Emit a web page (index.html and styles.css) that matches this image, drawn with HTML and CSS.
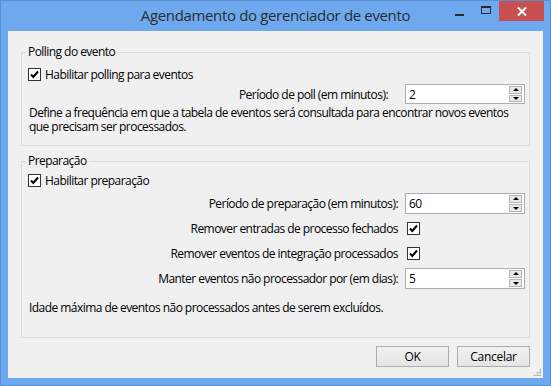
FILE: index.html
```html
<!DOCTYPE html>
<html lang="pt">
  <head>
    <meta charset="UTF-8" />
    <title>Agendamento do gerenciador de evento</title>
    <link rel="stylesheet" href="styles.css">
  </head>
  <body>
    <div class="window">
      <div class="titlebar">
        <div></div>
        <div class="title">Agendamento do gerenciador de evento</div>
        <div class="controls">
          <span class="ctl min"><i></i></span>
          <span class="ctl max"><i></i></span>
          <span class="ctl close">
            <svg width="10" height="9" viewBox="0 0 10 9"><path d="M1 0.5 L9 8.5 M9 0.5 L1 8.5" stroke="#fff" stroke-width="2"/></svg>
          </span>
        </div>
      </div>
      <div class="client">
        <fieldset class="group poll">
          <legend>Polling do evento</legend>
          <div class="form">
            <label class="check-row">
              <span class="check"><svg width="11" height="11" viewBox="0 0 11 11"><path d="M2 5.5 L4.3 8 L9 2.5" fill="none" stroke="#000" stroke-width="2"/></svg></span>
              Habilitar polling para eventos
            </label>
            <div class="label">Período de poll (em minutos):</div>
            <div class="spin"><span class="value">2</span><span class="arrows"><b class="up"></b><b class="down"></b></span></div>
          </div>
          <p class="note">Define a frequência em que a tabela de eventos será consultada para encontrar novos eventos que precisam ser processados.</p>
        </fieldset>

        <fieldset class="group prep">
          <legend>Preparação</legend>
          <div class="form">
            <label class="check-row">
              <span class="check"><svg width="11" height="11" viewBox="0 0 11 11"><path d="M2 5.5 L4.3 8 L9 2.5" fill="none" stroke="#000" stroke-width="2"/></svg></span>
              Habilitar preparação
            </label>
            <div class="label">Período de preparação (em minutos):</div>
            <div class="spin"><span class="value">60</span><span class="arrows"><b class="up"></b><b class="down"></b></span></div>
            <div class="label">Remover entradas de processo fechados</div>
            <span class="check"><svg width="11" height="11" viewBox="0 0 11 11"><path d="M2 5.5 L4.3 8 L9 2.5" fill="none" stroke="#000" stroke-width="2"/></svg></span>
            <div class="label">Remover eventos de integração processados</div>
            <span class="check"><svg width="11" height="11" viewBox="0 0 11 11"><path d="M2 5.5 L4.3 8 L9 2.5" fill="none" stroke="#000" stroke-width="2"/></svg></span>
            <div class="label">Manter eventos não processador por (em dias):</div>
            <div class="spin"><span class="value">5</span><span class="arrows"><b class="up"></b><b class="down"></b></span></div>
          </div>
          <p class="note">Idade máxima de eventos não processados antes de serem excluídos.</p>
        </fieldset>

        <div class="buttons">
          <button>OK</button>
          <button>Cancelar</button>
        </div>
        <span class="grip"></span>
      </div>
    </div>
  </body>
</html>
```

FILE: styles.css
```css
body {
  margin: 0;
  padding: 0;
  font-family: "Open Sans", "Noto Sans", sans-serif;
  font-size: 12px;
  letter-spacing: -0.55px;
  color: #000;
  background: #6ea9f0;
}
.window {
  width: 551px;
  height: 386px;
  box-sizing: border-box;
  border: 1px solid #5a8fd4;
  background: #6ea9f0;
  display: flex;
  flex-direction: column;
}
.titlebar {
  height: 30px;
  display: grid;
  grid-template-columns: 1fr auto 1fr;
  align-items: start;
}
.title {
  font-size: 15px;
  line-height: 20px;
  padding-top: 4px;
  color: #2c2c2c;
  letter-spacing: -0.35px;
}
.controls {
  display: flex;
  justify-content: flex-end;
  padding-right: 6px;
}
.ctl {
  height: 20px;
  display: flex;
  align-items: center;
  justify-content: center;
}
.min { width: 26px; }
.min i {
  width: 9px;
  height: 2px;
  margin-top: 7px;
  background: #2b2b2b;
}
.max { width: 27px; }
.max i {
  width: 8px;
  height: 5px;
  margin-top: -2px;
  border: 1px solid #2b2b2b;
  border-top-width: 2px;
}
.close {
  width: 45px;
  background: #c75050;
}
.client {
  flex: 1;
  margin: 0 7px 7px 7px;
  background: #f0f0f0;
  padding: 14px 13px 0 13px;
  position: relative;
}
.group {
  margin: 0;
  padding: 0 4px 0 6px;
  border: 1px solid #dcdcdc;
  min-width: 0;
}
.group legend {
  padding: 0 2px;
  margin-left: -2px;
  line-height: 14px;
}
.form {
  display: grid;
  grid-template-columns: 1fr 120px;
  column-gap: 7px;
  align-items: center;
}
.poll .form {
  padding-top: 5px;
  grid-template-rows: 20px 20px;
}
.poll .label {
  padding-right: 10px;
}
.prep {
  margin-top: 8px;
}
.prep .form {
  padding-top: 3px;
  grid-template-rows: 18px 21px 21px 21px 21px;
  row-gap: 4px;
}
.check-row {
  grid-column: 1 / -1;
  display: flex;
  align-items: center;
  gap: 4px;
}
.check {
  width: 11px;
  height: 11px;
  border: 1px solid #333;
  background: #fff;
  display: flex;
  align-items: center;
  justify-content: center;
}
.form > .check {
  justify-self: start;
  margin-left: 2px;
}
.label {
  text-align: right;
}
.spin {
  height: 100%;
  box-sizing: border-box;
  border: 1px solid #abadb3;
  background: #fff;
  display: flex;
  align-items: center;
  padding: 1px 2px 1px 3px;
}
.value {
  flex: 1;
}
.arrows {
  width: 13px;
  height: 100%;
  display: flex;
  flex-direction: column;
  gap: 1px;
}
.arrows b {
  flex: 1;
  background: #e8e8e8;
  border: 1px solid #b5b5b5;
  position: relative;
}
.arrows b::after {
  content: "";
  position: absolute;
  left: 50%;
  top: 50%;
  margin: -2px 0 0 -3px;
  border: 3px solid transparent;
}
.arrows .up::after {
  border-bottom: 3px solid #000;
  border-top-width: 0;
}
.arrows .down::after {
  border-top: 3px solid #000;
  border-bottom-width: 0;
  margin-top: -1px;
}
.note {
  margin: 0;
  padding-left: 1px;
  line-height: 14px;
}
.poll .note {
  padding-top: 2px;
  padding-bottom: 11px;
}
.prep .note {
  padding-top: 12px;
  padding-bottom: 22px;
}
.buttons {
  display: flex;
  justify-content: flex-end;
  gap: 8px;
  margin-top: 8px;
}
.buttons button {
  width: 73px;
  height: 21px;
  font-family: inherit;
  font-size: 12px;
  letter-spacing: -0.3px;
  color: #000;
  border: 1px solid #acacac;
  background: linear-gradient(#f0f0f0, #e5e5e5);
  padding: 0;
}
.grip {
  position: absolute;
  right: 2px;
  bottom: 2px;
  width: 8px;
  height: 8px;
  background:
    radial-gradient(circle, #b9b9b9 1px, transparent 1.2px) 0 0 / 3px 3px;
  clip-path: polygon(100% 0, 100% 100%, 0 100%);
}
```
